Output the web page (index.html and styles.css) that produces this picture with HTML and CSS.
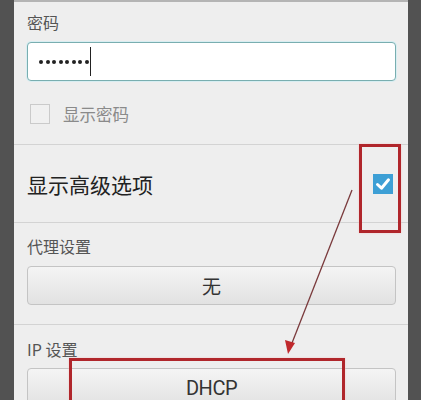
FILE: index.html
```html
<!DOCTYPE html>
<html lang="zh-CN">
<head>
  <meta charset="UTF-8" />
  <meta name="viewport" content="width=device-width, initial-scale=1" />
  <title>WLAN 高级选项</title>
  <link rel="stylesheet" href="styles.css">
</head>
<body>

  <div class="dialog">

    <!-- 密码 -->
    <div class="section pwd-section">
      <div class="field-label">密码</div>
      <div class="pwd-input">
        <div class="dots">
          <span></span><span></span><span></span><span></span>
          <span></span><span></span><span></span><span></span>
        </div>
        <div class="caret"></div>
      </div>
      <label class="check-row">
        <span class="box"></span>
        <span class="check-text">显示密码</span>
      </label>
    </div>

    <!-- 高级选项 -->
    <div class="advanced-row">
      <span class="advanced-text">显示高级选项</span>
      <span class="box checked">
        <svg viewBox="0 0 20 20" width="20" height="20">
          <path d="M4.5 10.5 L8.5 14.2 L15.5 5.8" fill="none" stroke="#fff" stroke-width="3" stroke-linecap="round" stroke-linejoin="round" />
        </svg>
      </span>
    </div>

    <!-- 代理设置 -->
    <div class="section proxy-section">
      <div class="field-label">代理设置</div>
      <button class="spinner">无</button>
    </div>

    <!-- IP 设置 -->
    <div class="section ip-section">
      <div class="field-label">IP 设置</div>
      <button class="spinner dhcp">DHCP</button>
    </div>

  </div>

  <!-- 标注 -->
  <div class="mark mark-check"></div>
  <div class="mark mark-dhcp"></div>
  <svg class="arrow" width="421" height="400" viewBox="0 0 421 400">
    <line x1="352" y1="190" x2="292" y2="343" stroke="#7a3a3c" stroke-width="1.3" />
    <polygon points="288,354 285,340 295,343" fill="#c0282c" />
  </svg>

</body>
</html>
```

FILE: styles.css
```css
/* Reset */
* {
  margin: 0;
  padding: 0;
  box-sizing: border-box;
}

body {
  width: 421px;
  height: 400px;
  overflow: hidden;
  position: relative;
  background: #525252;
  font-family: "Noto Sans CJK SC", "Noto Sans", sans-serif;
}

/* 对话框 */
.dialog {
  width: 394px;
  height: 400px;
  margin-left: 14px;
  background: #eeeeee;
  border-top: 2px solid #b4b4b4;
}

.section {
  padding: 0 12px 0 13px;
  border-bottom: 1px solid #d3d3d3;
}

.field-label {
  font-size: 16px;
  line-height: 20px;
  color: #555;
}

/* 密码 */
.pwd-section {
  padding-top: 10px;
  padding-bottom: 20px;
}

.pwd-input {
  margin-top: 10px;
  height: 39px;
  background: #fff;
  border: 1px solid #79aeb0;
  border-radius: 4px;
  box-shadow: 0 0 0 1px #d8eef2;
  display: flex;
  align-items: center;
  padding-left: 11px;
}

.dots {
  display: flex;
  gap: 2.5px;
}

.dots span {
  width: 4px;
  height: 4px;
  border-radius: 50%;
  background: #222;
}

.caret {
  width: 1px;
  height: 29px;
  background: #222;
  margin-left: 1px;
}

.check-row {
  margin-top: 22px;
  display: flex;
  align-items: center;
  gap: 13px;
  padding-left: 3px;
  height: 21px;
}

.box {
  width: 20px;
  height: 20px;
  border: 1px solid #cacaca;
  background: #f0f0f0;
  display: inline-block;
}

.check-text {
  font-size: 16.5px;
  color: #8a8a8a;
}

/* 高级选项 */
.advanced-row {
  height: 78px;
  display: flex;
  align-items: center;
  justify-content: space-between;
  padding: 0 15px 0 13px;
  border-bottom: 1px solid #d3d3d3;
}

.advanced-text {
  font-size: 21px;
  color: #222;
  padding-top: 1px;
}

.box.checked {
  border: none;
  background: #3d9fd5;
  margin-top: 1px;
}

.box.checked svg {
  display: block;
}

/* 代理 / IP */
.proxy-section {
  padding-top: 13px;
  padding-bottom: 19px;
}

.ip-section {
  padding-top: 14px;
  border-bottom: none;
}

.spinner {
  display: block;
  width: 100%;
  height: 39px;
  margin-top: 10px;
  border: 1px solid #c4c4c4;
  border-radius: 4px;
  background: linear-gradient(#f4f4f4, #e2e2e2);
  font-family: inherit;
  font-size: 19px;
  color: #333;
}

.dhcp {
  margin-top: 9px;
  font-family: "Roboto", "Noto Sans", sans-serif;
  font-size: 20px;
  letter-spacing: -0.5px;
}

/* 标注 */
.mark {
  position: absolute;
  border: 3px solid #b0262b;
  box-shadow: 0 0 2px #f2c9c9;
}

.mark-check {
  left: 359px;
  top: 144px;
  width: 42px;
  height: 89px;
}

.mark-dhcp {
  left: 69px;
  top: 358px;
  width: 276px;
  height: 60px;
}

.arrow {
  position: absolute;
  left: 0;
  top: 0;
  pointer-events: none;
}
```
